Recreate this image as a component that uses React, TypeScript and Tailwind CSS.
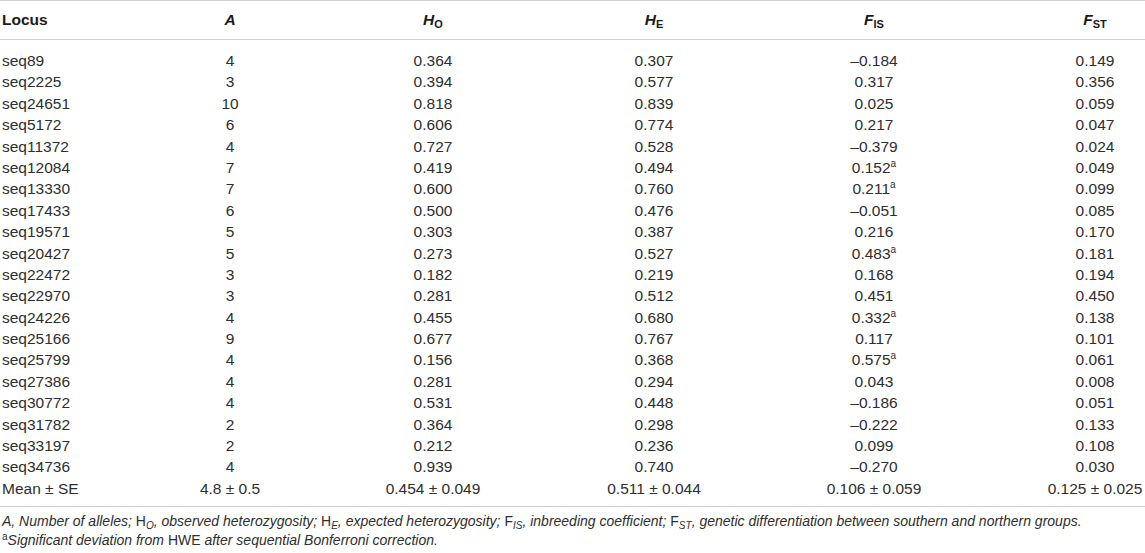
import React from "react";

type Row = [string, string, string, string, string, boolean, string];

const rows: Row[] = [
  ["seq89", "4", "0.364", "0.307", "–0.184", false, "0.149"],
  ["seq2225", "3", "0.394", "0.577", "0.317", false, "0.356"],
  ["seq24651", "10", "0.818", "0.839", "0.025", false, "0.059"],
  ["seq5172", "6", "0.606", "0.774", "0.217", false, "0.047"],
  ["seq11372", "4", "0.727", "0.528", "–0.379", false, "0.024"],
  ["seq12084", "7", "0.419", "0.494", "0.152", true, "0.049"],
  ["seq13330", "7", "0.600", "0.760", "0.211", true, "0.099"],
  ["seq17433", "6", "0.500", "0.476", "–0.051", false, "0.085"],
  ["seq19571", "5", "0.303", "0.387", "0.216", false, "0.170"],
  ["seq20427", "5", "0.273", "0.527", "0.483", true, "0.181"],
  ["seq22472", "3", "0.182", "0.219", "0.168", false, "0.194"],
  ["seq22970", "3", "0.281", "0.512", "0.451", false, "0.450"],
  ["seq24226", "4", "0.455", "0.680", "0.332", true, "0.138"],
  ["seq25166", "9", "0.677", "0.767", "0.117", false, "0.101"],
  ["seq25799", "4", "0.156", "0.368", "0.575", true, "0.061"],
  ["seq27386", "4", "0.281", "0.294", "0.043", false, "0.008"],
  ["seq30772", "4", "0.531", "0.448", "–0.186", false, "0.051"],
  ["seq31782", "2", "0.364", "0.298", "–0.222", false, "0.133"],
  ["seq33197", "2", "0.212", "0.236", "0.099", false, "0.108"],
  ["seq34736", "4", "0.939", "0.740", "–0.270", false, "0.030"],
];

const grid = "grid grid-cols-[128px_204px_202px_240px_200px_1fr]";

function Cells({ r }: { r: Row }) {
  return (
    <div className={`${grid} h-[21.4px] items-center`}>
      <div className="pl-[2px]">{r[0]}</div>
      <div className="text-center">{r[1]}</div>
      <div className="text-center">{r[2]}</div>
      <div className="text-center">{r[3]}</div>
      <div className="text-center">
        {r[4]}
        {r[5] && <sup className="text-[10px] -top-[6px]">a</sup>}
      </div>
      <div className="text-center pl-[71px]">{r[6]}</div>
    </div>
  );
}

export default function App() {
  return (
    <div
      className="w-[1145px] h-[553px] bg-white text-[#2e2e2e] text-[15.5px] overflow-hidden"
      style={{ fontFamily: '"Liberation Sans", Arial, sans-serif' }}
    >
      <div className={`${grid} h-[40px] items-center border-t border-b border-[#d0d0d0] font-bold text-[#1a1a1a]`}>
        <div className="pl-[2px]">Locus</div>
        <div className="text-center italic">A</div>
        <div className="text-center">
          <i>H</i>
          <sub className="text-[11px]">O</sub>
        </div>
        <div className="text-center">
          <i>H</i>
          <sub className="text-[11px]">E</sub>
        </div>
        <div className="text-center">
          <i>F</i>
          <sub className="text-[11px]">IS</sub>
        </div>
        <div className="text-center pl-[71px]">
          <i>F</i>
          <sub className="text-[11px]">ST</sub>
        </div>
      </div>
      <div className="pt-[9px] pb-[8px] border-b border-[#d0d0d0]">
        {rows.map((r) => (
          <Cells key={r[0]} r={r} />
        ))}
        <div className={`${grid} h-[21.4px] items-center`}>
          <div className="pl-[2px]">Mean ± SE</div>
          <div className="text-center">4.8 ± 0.5</div>
          <div className="text-center">0.454 ± 0.049</div>
          <div className="text-center">0.511 ± 0.044</div>
          <div className="text-center">0.106 ± 0.059</div>
          <div className="text-center pl-[71px]">0.125 ± 0.025</div>
        </div>
      </div>
      <div className="pt-[5px] pl-[2px] text-[14px] leading-[19px] text-[#2e2e2e]">
        <div>
          <i>A, Number of alleles; </i>H<sub className="text-[10px]"><i>O</i></sub>
          <i>, observed heterozygosity; </i>H<sub className="text-[10px]"><i>E</i></sub>
          <i>, expected heterozygosity; </i>F<sub className="text-[10px]"><i>IS</i></sub>
          <i>, inbreeding coefficient; </i>F<sub className="text-[10px]"><i>ST</i></sub>
          <i>, genetic differentiation between southern and northern groups.</i>
        </div>
        <div>
          <sup className="text-[10px]">a</sup>
          <i>Significant deviation from </i>HWE<i> after sequential Bonferroni correction.</i>
        </div>
      </div>
    </div>
  );
}
